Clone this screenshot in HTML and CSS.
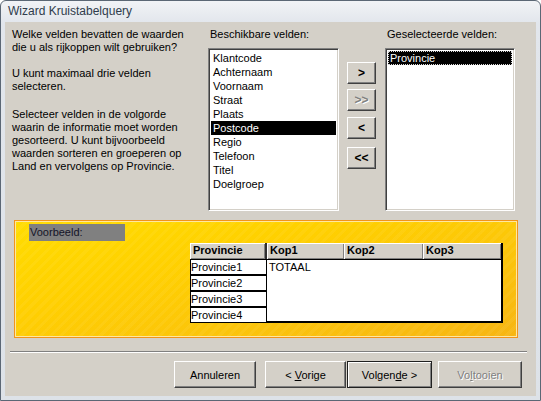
FILE: index.html
```html
<!DOCTYPE html>
<html>
<head>
<meta charset="utf-8">
<link rel="stylesheet" href="styles.css">
</head>
<body>
<div class="window">
  <div class="titlebar">Wizard Kruistabelquery</div>
  <div class="client">
    <div class="top">
      <div class="intro">
        <p>Welke velden bevatten de waarden<br>die u als rijkoppen wilt gebruiken?</p>
        <p class="p2">U kunt maximaal drie velden<br>selecteren.</p>
        <p class="p3">Selecteer velden in de volgorde<br>waarin de informatie moet worden<br>gesorteerd. U kunt bijvoorbeeld<br>waarden sorteren en groeperen op<br>Land en vervolgens op Provincie.</p>
      </div>
      <div class="listcol avail">
        <div class="label">Beschikbare velden:</div>
        <ul class="listbox">
          <li>Klantcode</li>
          <li>Achternaam</li>
          <li>Voornaam</li>
          <li>Straat</li>
          <li>Plaats</li>
          <li class="sel">Postcode</li>
          <li>Regio</li>
          <li>Telefoon</li>
          <li>Titel</li>
          <li>Doelgroep</li>
        </ul>
      </div>
      <div class="movebtns">
        <div class="btn mv mv1"><span>&gt;</span></div>
        <div class="btn mv mv2 disabled"><span>&gt;&gt;</span></div>
        <div class="btn mv mv3"><span>&lt;</span></div>
        <div class="btn mv mv4"><span>&lt;&lt;</span></div>
      </div>
      <div class="listcol chosen">
        <div class="label">Geselecteerde velden:</div>
        <ul class="listbox">
          <li class="sel focus">Provincie</li>
        </ul>
      </div>
    </div>

    <div class="preview">
      <div class="vlabel">Voorbeeld:</div>
      <div class="tbl">
        <div class="pcol">
          <div class="hdr phdr">Provincie</div>
          <div class="pcell">Provincie1</div>
          <div class="pcell">Provincie2</div>
          <div class="pcell">Provincie3</div>
          <div class="pcell">Provincie4</div>
        </div>
        <div class="kcol">
          <div class="khdrs">
            <div class="hdr k1">Kop1</div>
            <div class="hdr k2">Kop2</div>
            <div class="hdr k3">Kop3</div>
          </div>
          <div class="kbody">TOTAAL</div>
        </div>
      </div>
    </div>

    <div class="sep"></div>

    <div class="footer">
      <div class="btn fb b-cancel"><span>Annuleren</span></div>
      <div class="btn fb b-prev"><span>&lt; <u>V</u>orige</span></div>
      <div class="btn fb b-next default"><span>Volgen<u>d</u>e &gt;</span></div>
      <div class="btn fb b-finish disabled"><span>Vo<u>l</u>tooien</span></div>
    </div>
  </div>
</div>
</body>
</html>
```

FILE: styles.css
```css
* { box-sizing: border-box; margin: 0; padding: 0; }

body {
  margin: 0;
  background: #ffffff;
  font-family: "Liberation Sans", Arial, sans-serif;
  font-size: 11px;
  color: #000;
}

.window {
  width: 541px;
  height: 401px;
  border: 1px solid #5b6775;
  border-radius: 6px 6px 0 0;
  background: linear-gradient(#f1f3f6, #e2e6ec 22px, #dde2e8);
  display: flex;
  flex-direction: column;
  padding: 0 4px 4px 4px;
}

.titlebar {
  height: 21px;
  font-size: 12px;
  line-height: 20px;
  padding-left: 3px;
  color: #2f3c4c;
}

.client {
  flex: 1;
  background: #d4d0c8;
  display: flex;
  flex-direction: column;
}

.top {
  display: flex;
  padding: 6px 0 0 7px;
}

.intro {
  width: 196px;
  line-height: 13px;
}
.p2 { margin-top: 13px; }
.p3 { margin-top: 15px; }

.listcol.avail { width: 131px; }
.listcol.chosen { width: 130px; margin-left: 9px; }

.label {
  height: 13px;
  line-height: 13px;
  padding-left: 2px;
  margin-bottom: 7px;
  white-space: nowrap;
}

.listbox {
  list-style: none;
  background: #fff;
  height: 163px;
  border: 1px solid;
  border-color: #808080 #ffffff #ffffff #808080;
  box-shadow: inset 1px 1px #404040, inset -1px -1px #d4d0c8;
  padding: 2px;
}

.listbox li {
  height: 14px;
  line-height: 14px;
  padding-left: 2px;
  white-space: nowrap;
}
.listbox li.sel { background: #000; color: #fff; }
.listbox li.focus { outline: 1px dotted #d8d8d8; outline-offset: -1px; }

.movebtns {
  width: 29px;
  margin-left: 8px;
  display: flex;
  flex-direction: column;
}

.btn {
  display: flex;
  align-items: center;
  justify-content: center;
  background: #d4d0c8;
  border: 1px solid;
  border-color: #ffffff #404040 #404040 #ffffff;
  box-shadow: inset -1px -1px #808080;
  white-space: nowrap;
}
.btn.disabled { color: #808080; text-shadow: 1px 1px #ffffff; }
.btn u { text-decoration: underline; }

.mv { height: 22px; font-weight: bold; font-size: 12px; }
.mv1 { margin-top: 34px; }
.mv2 { margin-top: 5px; }
.mv3 { margin-top: 6px; }
.mv4 { margin-top: 8px; }

.preview {
  margin: 9px 0 0 9px;
  width: 504px;
  height: 118px;
  border: 1px solid #f2941a;
  box-shadow: inset 0 0 0 1px #ffe7a0;
  background:
    repeating-linear-gradient(135deg, rgba(255,255,255,0.05) 0 3px, rgba(255,255,255,0) 3px 7px),
    linear-gradient(165deg, #ffdc00 0%, #ffd000 35%, #fbc30c 70%, #f7b512 100%);
  padding: 3px 0 0 14px;
}

.vlabel {
  width: 96px;
  height: 17px;
  line-height: 17px;
  background: #808080;
  padding-left: 1px;
  color: #141428;
}

.tbl {
  display: flex;
  margin: 2px 0 0 161px;
}

.pcol { width: 77px; }

.hdr {
  height: 16px;
  line-height: 15px;
  background: #d4d0c8;
  box-shadow: inset 1px 1px #ffffff, inset -1px -1px #808080;
  font-weight: bold;
  padding-left: 3px;
  white-space: nowrap;
}
.phdr { border-right: 2px solid #303030; }

.pcell {
  height: 16px;
  line-height: 14px;
  border: 1px solid #000;
  background: #fff;
  padding-left: 0;
}

.kcol { width: 236px; }
.khdrs { display: flex; }
.k1 { width: 77px; }
.k2 { width: 79px; }
.k3 { width: 80px; border-right: 2px solid #000; }

.kbody {
  height: 64px;
  background: #fff;
  border-top: 1px solid #000;
  border-right: 2px solid #000;
  border-bottom: 2px solid #000;
  padding: 1px 0 0 2px;
  line-height: 13px;
}

.sep {
  margin: 13px 0 0 5px;
  width: 517px;
  height: 2px;
  border-top: 1px solid #808080;
  border-bottom: 1px solid #ffffff;
}

.footer {
  display: flex;
  margin-top: 8px;
  padding-left: 169px;
}

.fb { height: 27px; }
.b-cancel { width: 82px; margin-right: 9px; }
.b-prev { width: 81px; margin-right: 1px; }
.b-next { width: 85px; margin-right: 6px; }
.b-finish { width: 84px; }

.btn.default {
  border: 1px solid #202020;
  box-shadow: inset 1px 1px #ffffff, inset -1px -1px #808080;
}
```
